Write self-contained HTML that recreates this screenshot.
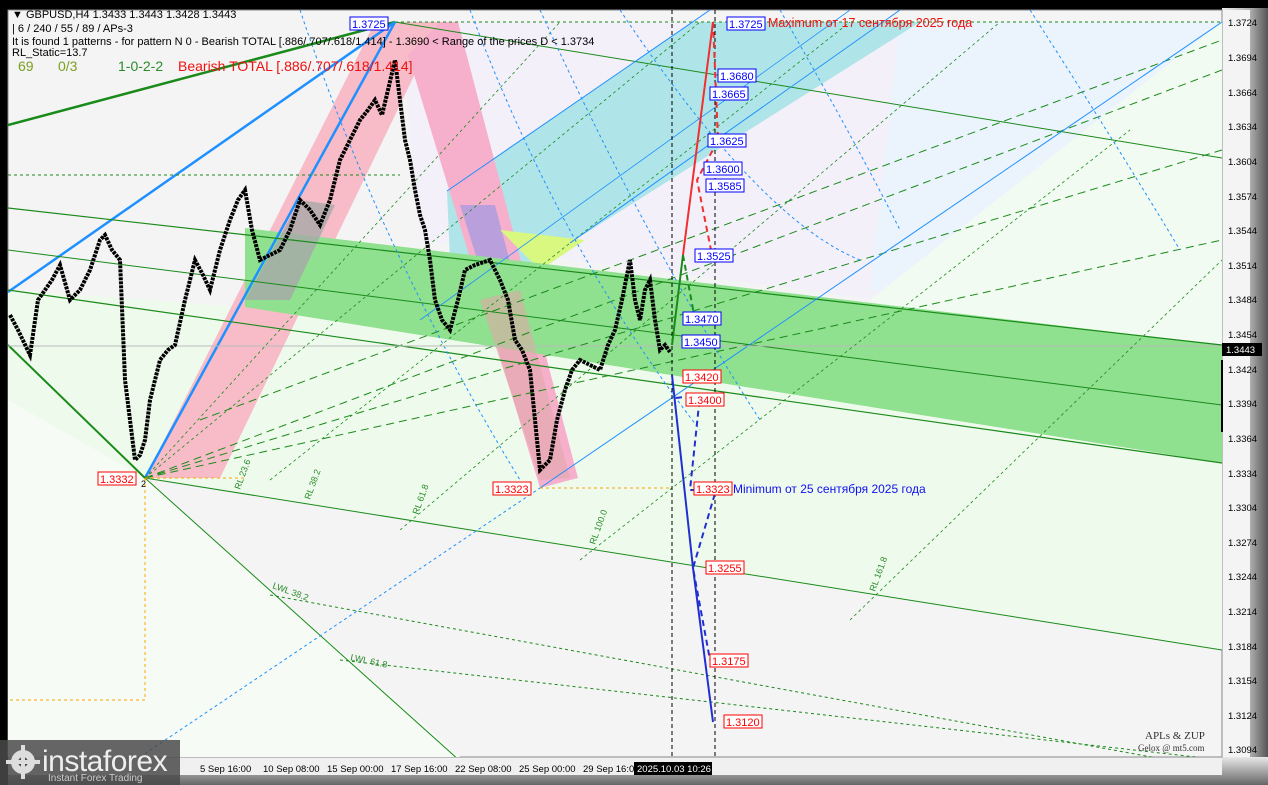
<!DOCTYPE html>
<html><head><meta charset="utf-8"><style>
html,body{margin:0;padding:0;background:#000;}
body{width:1268px;height:785px;overflow:hidden;position:relative;font-family:"Liberation Sans",sans-serif;}
svg{position:absolute;left:0;top:0;}
</style></head><body>
<svg width="1268" height="785" viewBox="0 0 1268 785" xmlns="http://www.w3.org/2000/svg" font-family="Liberation Sans, sans-serif">
<defs>
<linearGradient id="rg" x1="0" x2="1" y1="0" y2="0"><stop offset="0" stop-color="#f0f0f0"/><stop offset="0.6" stop-color="#b0b0b0"/><stop offset="1" stop-color="#555"/></linearGradient>
<linearGradient id="bg2" x1="0" x2="0" y1="0" y2="1"><stop offset="0" stop-color="#e8e8e8"/><stop offset="1" stop-color="#666"/></linearGradient>
<clipPath id="cl"><rect x="8" y="10" width="1214" height="747"/></clipPath>
</defs>
<rect x="0" y="0" width="1268" height="785" fill="#000"/>
<rect x="1222" y="8" width="46" height="777" fill="url(#rg)"/>
<rect x="8" y="757" width="1260" height="28" fill="url(#bg2)"/>
<rect x="8" y="757" width="1214" height="18" fill="#f0f0f0"/>
<rect x="1222" y="10" width="28" height="747" fill="#f4f4f4"/>
<rect x="8" y="10" width="1214" height="747" fill="#f4f4f4" stroke="#888" stroke-width="1"/>
<g clip-path="url(#cl)">
<polygon points="400,22 1222,22 1222,345 420,240" fill="#f3f0fa"/>
<polygon points="900,22 1222,22 1222,25 940,300 870,290" fill="#ebf4fc"/>
<polygon points="8,290 245,307 1222,463 1222,650 145,478 8,400" fill="#eefbec"/>
<polygon points="8,400 145,478 460,757 8,757" fill="#f6fbf5"/>
<polygon points="870,300 1222,22 1222,463" fill="#f2fbf1"/>
<polygon points="447,191 692,22 920,22 570,243 500,290 450,260" fill="#afe5e8"/>
<polygon points="145,478 220,478 440,22 375,22" fill="#f7bcc7"/>
<polygon points="408,55 440,22 458,22 578,478 540,488" fill="#f7b0cc"/>
<polygon points="460,205 495,205 520,300 490,300" fill="#b9a0dc"/>
<polygon points="500,230 585,240 540,270" fill="#d8f880"/>
<polygon points="245,228 1222,345 1222,463 245,307" fill="#8fe08f"/>
<polygon points="245,300 300,200 335,205 290,300" fill="#a8a8a8" opacity="0.8"/>
<polygon points="480,300 520,290 570,478 540,480" fill="#e0a8a8" opacity="0.6"/>
<g fill="none">
<line x1="8" y1="125" x2="395" y2="22" stroke="#1a8a1a" stroke-width="2.5"/>
<line x1="8" y1="292" x2="395" y2="22" stroke="#1e90ff" stroke-width="2.5"/>
<line x1="145" y1="478" x2="395" y2="22" stroke="#1e90ff" stroke-width="2.5"/>
<line x1="8" y1="345" x2="145" y2="478" stroke="#1a8a1a" stroke-width="2"/>
<line x1="145" y1="478" x2="470" y2="770" stroke="#1a8a1a" stroke-width="1"/>
<line x1="8" y1="208" x2="1222" y2="345" stroke="#1a8a1a" stroke-width="1.2"/>
<line x1="8" y1="250" x2="1222" y2="405" stroke="#1a8a1a" stroke-width="1"/>
<line x1="8" y1="290" x2="1222" y2="463" stroke="#1a8a1a" stroke-width="1.2"/>
<line x1="395" y1="22" x2="1222" y2="158" stroke="#1a8a1a" stroke-width="1"/>
<line x1="145" y1="478" x2="1222" y2="650" stroke="#1a8a1a" stroke-width="1"/>
<line x1="395" y1="22" x2="1222" y2="22" stroke="#1a8a1a" stroke-dasharray="3,3"/>
<line x1="8" y1="175" x2="400" y2="175" stroke="#1a8a1a" stroke-dasharray="3,3"/>
<line x1="270" y1="595" x2="1222" y2="770" stroke="#1a8a1a" stroke-dasharray="3,3"/>
<line x1="340" y1="660" x2="1222" y2="760" stroke="#1a8a1a" stroke-dasharray="3,3"/>
<line x1="145" y1="478" x2="1222" y2="70" stroke="#1a8a1a" stroke-dasharray="8,5"/>
<line x1="145" y1="478" x2="1222" y2="150" stroke="#1a8a1a" stroke-dasharray="8,5"/>
<line x1="145" y1="478" x2="1222" y2="240" stroke="#1a8a1a" stroke-dasharray="8,5"/>
<line x1="200" y1="420" x2="1222" y2="40" stroke="#1a8a1a" stroke-dasharray="8,5"/>
<line x1="145" y1="478" x2="560" y2="22" stroke="#1a8a1a" stroke-dasharray="3,3" stroke-width="0.8"/>
<line x1="145" y1="478" x2="700" y2="22" stroke="#1a8a1a" stroke-dasharray="3,3" stroke-width="0.8"/>
<line x1="270" y1="480" x2="850" y2="22" stroke="#1a8a1a" stroke-dasharray="3,3" stroke-width="0.8"/>
<line x1="400" y1="530" x2="1000" y2="22" stroke="#1a8a1a" stroke-dasharray="3,3" stroke-width="0.8"/>
<line x1="580" y1="560" x2="1130" y2="130" stroke="#1a8a1a" stroke-dasharray="3,3" stroke-width="0.8"/>
<line x1="850" y1="620" x2="1222" y2="260" stroke="#1a8a1a" stroke-dasharray="3,3" stroke-width="0.8"/>
<line x1="540" y1="488" x2="1222" y2="22" stroke="#1e90ff" stroke-width="1"/>
<line x1="447" y1="191" x2="710" y2="10" stroke="#1e90ff" stroke-width="1"/>
<line x1="570" y1="243" x2="900" y2="10" stroke="#1e90ff" stroke-width="1"/>
<line x1="420" y1="320" x2="850" y2="10" stroke="#1e90ff" stroke-width="0.8"/>
<line x1="140" y1="757" x2="540" y2="488" stroke="#1e90ff" stroke-dasharray="3,3"/>
<path d="M300,10 Q380,250 520,480" stroke="#1e90ff" stroke-dasharray="3,3"/>
<path d="M470,10 Q560,250 700,430" stroke="#1e90ff" stroke-dasharray="3,3"/>
<path d="M540,10 Q650,250 760,420" stroke="#1e90ff" stroke-dasharray="3,3"/>
<path d="M620,10 Q760,220 860,260" stroke="#1e90ff" stroke-dasharray="3,3"/>
<path d="M780,10 Q860,150 900,230" stroke="#1e90ff" stroke-dasharray="3,3"/>
<path d="M1030,10 Q1120,150 1180,250" stroke="#1e90ff" stroke-dasharray="3,3"/>
<line x1="8" y1="346" x2="1222" y2="346" stroke="#bbb" stroke-width="1"/>
<line x1="145" y1="478" x2="245" y2="478" stroke="#ffa500" stroke-dasharray="3,3"/>
<line x1="540" y1="488" x2="672" y2="488" stroke="#ffa500" stroke-dasharray="3,3"/>
<polyline points="145,478 145,700 8,700" stroke="#ffa500" stroke-dasharray="3,3"/>
<line x1="672" y1="10" x2="672" y2="757" stroke="#000" stroke-dasharray="4,3"/>
<line x1="715" y1="10" x2="715" y2="757" stroke="#000" stroke-dasharray="4,3"/>
<polyline points="10,315 18,330 30,355 38,300 45,290 52,280 60,265 70,300 80,290 90,270 100,240 105,235 112,250 120,260 125,380 130,420 135,460 140,455 145,440 150,400 160,360 168,350 175,345 185,300 195,260 203,275 210,290 220,250 230,220 238,200 245,190 252,230 260,260 270,255 280,250 290,230 300,200 310,210 320,225 330,200 340,160 350,140 360,120 368,110 375,100 382,115 388,90 395,60 400,100 405,140 410,160 415,190 420,215 425,230 430,260 435,300 442,320 450,330 458,300 465,270 475,265 490,260 500,280 508,300 515,340 522,350 530,370 535,420 540,470 545,465 550,460 557,420 565,390 572,370 580,360 590,365 600,370 608,345 615,330 622,300 630,260 635,300 640,320 645,290 650,280 655,320 660,350 665,345 670,352" stroke="#000" stroke-width="4" stroke-dasharray="3,1"/>
<line x1="683" y1="255" x2="713" y2="22" stroke="#f03030" stroke-width="2"/>
<polyline points="713,22 718,140 697,180 712,255" stroke="#f03030" stroke-width="2" stroke-dasharray="6,4"/>
<polyline points="672,345 683,255" stroke="#1a8a1a" stroke-width="2"/>
<polyline points="683,255 695,320" stroke="#1a8a1a" stroke-width="2" stroke-dasharray="6,4"/>
<polyline points="672,375 693,568 713,722" stroke="#2030d0" stroke-width="2"/>
<polyline points="676,398 700,395 690,490 716,490 693,568 710,660" stroke="#2030d0" stroke-width="2" stroke-dasharray="6,4"/>
</g>
<g font-size="9" fill="#2a8a2a">
<text x="240" y="490" transform="rotate(-70 240 490)">RL 23.6</text>
<text x="310" y="500" transform="rotate(-70 310 500)">RL 38.2</text>
<text x="418" y="515" transform="rotate(-70 418 515)">RL 61.8</text>
<text x="595" y="545" transform="rotate(-70 595 545)">RL 100.0</text>
<text x="875" y="592" transform="rotate(-70 875 592)">RL 161.8</text>
<text x="272" y="588" transform="rotate(20 272 588)">LWL 38.2</text>
<text x="350" y="660" transform="rotate(12 350 660)">LWL 61.8</text>
</g>
</g>
<g font-size="11" fill="#000">
<text x="12" y="18">▼  GBPUSD,H4  1.3433 1.3443 1.3428 1.3443</text>
<text x="12" y="32">| 6 / 240 / 55 / 89 / APs-3</text>
<text x="12" y="45">It is found 1 patterns  -  for pattern N 0 - Bearish TOTAL [.886/.707/.618/1.414] - 1.3690 &lt; Range of the prices D &lt; 1.3734</text>
<text x="12" y="56">RL_Static=13.7</text>
</g>
<g font-size="14">
<text x="18" y="71" fill="#7aa020">69</text>
<text x="58" y="71" fill="#7aa020">0/3</text>
<text x="118" y="71" fill="#2a8a2a">1-0-2-2</text>
<text x="178" y="71" fill="#f01010">Bearish TOTAL [.886/.707/.618/1.414]</text>
<text x="768" y="27" fill="#f01010" font-size="12.5">Maximum от 17 сентября 2025 года</text>
<text x="733" y="493" fill="#1010f0" font-size="12">Minimum от 25 сентября 2025 года</text>
</g>
<g font-size="11">
<g fill="#fff" stroke="#0000ff"><rect x="350" y="17" width="38" height="13"/><rect x="727" y="17" width="38" height="13"/><rect x="718" y="69" width="38" height="13"/><rect x="710" y="87" width="38" height="13"/><rect x="708" y="134" width="38" height="13"/><rect x="704" y="162" width="38" height="13"/><rect x="706" y="179" width="38" height="13"/><rect x="695" y="249" width="38" height="13"/><rect x="683" y="312" width="38" height="13"/><rect x="682" y="335" width="38" height="13"/></g>
<g fill="#0000ff"><text x="352" y="28">1.3725</text><text x="729" y="28">1.3725</text><text x="720" y="80">1.3680</text><text x="712" y="98">1.3665</text><text x="710" y="145">1.3625</text><text x="706" y="173">1.3600</text><text x="708" y="190">1.3585</text><text x="697" y="260">1.3525</text><text x="685" y="323">1.3470</text><text x="684" y="346">1.3450</text></g>
<g fill="#fff" stroke="#ff0000"><rect x="98" y="472" width="38" height="13"/><rect x="493" y="482" width="38" height="13"/><rect x="683" y="370" width="38" height="13"/><rect x="686" y="393" width="38" height="13"/><rect x="694" y="482" width="38" height="13"/><rect x="706" y="561" width="38" height="13"/><rect x="710" y="654" width="38" height="13"/><rect x="724" y="715" width="38" height="13"/></g>
<g fill="#ff0000"><text x="100" y="483">1.3332</text><text x="495" y="493">1.3323</text><text x="685" y="381">1.3420</text><text x="688" y="404">1.3400</text><text x="696" y="493">1.3323</text><text x="708" y="572">1.3255</text><text x="712" y="665">1.3175</text><text x="726" y="726">1.3120</text></g>
<text x="141" y="487" fill="#000" font-size="9">2</text>
</g>
<g font-size="9.5" fill="#000">
<text x="1228" y="26">1.3724</text><text x="1228" y="61">1.3694</text><text x="1228" y="96">1.3664</text><text x="1228" y="130">1.3634</text><text x="1228" y="165">1.3604</text><text x="1228" y="200">1.3574</text><text x="1228" y="234">1.3544</text><text x="1228" y="269">1.3514</text><text x="1228" y="303">1.3484</text><text x="1228" y="338">1.3454</text><text x="1228" y="373">1.3424</text><text x="1228" y="407">1.3394</text><text x="1228" y="442">1.3364</text><text x="1228" y="477">1.3334</text><text x="1228" y="511">1.3304</text><text x="1228" y="546">1.3274</text><text x="1228" y="580">1.3244</text><text x="1228" y="615">1.3214</text><text x="1228" y="650">1.3184</text><text x="1228" y="684">1.3154</text><text x="1228" y="719">1.3124</text><text x="1228" y="753">1.3094</text>
</g>
<rect x="1222" y="343" width="40" height="13" fill="#000"/>
<text x="1226" y="353" font-size="9.5" fill="#fff">1.3443</text>
<rect x="1221" y="360" width="2" height="72" fill="#000"/>
<g font-size="9.5" fill="#000">
<text x="200" y="772">5 Sep 16:00</text><text x="263" y="772">10 Sep 08:00</text><text x="327" y="772">15 Sep 00:00</text><text x="391" y="772">17 Sep 16:00</text><text x="455" y="772">22 Sep 08:00</text><text x="519" y="772">25 Sep 00:00</text><text x="583" y="772">29 Sep 16:0</text>
</g>
<rect x="634" y="762" width="78" height="13" fill="#000"/>
<text x="637" y="772" font-size="9.5" fill="#fff">2025.10.03 10:26</text>
<text x="1145" y="739" font-size="11" font-family="Liberation Serif, serif" fill="#333">APLs &amp; ZUP</text>
<text x="1138" y="751" font-size="9" font-family="Liberation Serif, serif" fill="#333">Gelox @ mt5.com</text>
<rect x="0" y="740" width="180" height="45" fill="#4a4a4a" opacity="0.85"/>
<g fill="#ddd">
<circle cx="23" cy="762" r="12"/>
<circle cx="23" cy="762" r="5" fill="#4a4a4a"/>
<rect x="21" y="745" width="4" height="34"/><rect x="6" y="760" width="34" height="4"/>
</g>
<text x="42" y="771" font-size="30" fill="#eee" letter-spacing="-0.5">instaforex</text>
<text x="48" y="781" font-size="10" fill="#ccc">Instant Forex Trading</text>
</svg>
</body></html>
